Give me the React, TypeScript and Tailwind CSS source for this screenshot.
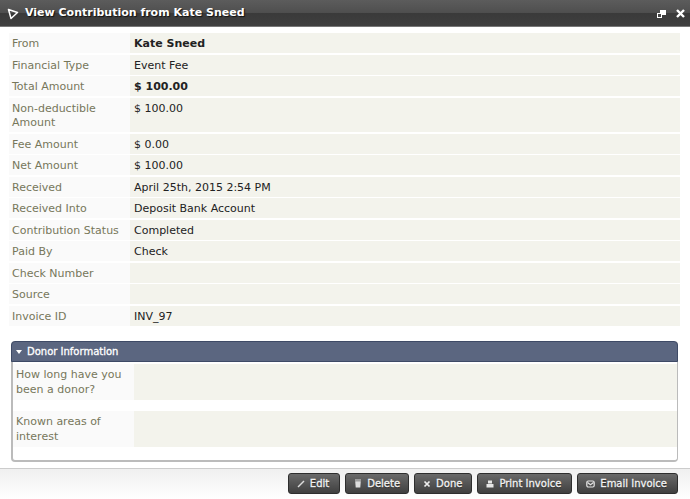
import { ReactNode } from "react";

const rows: { label: string; value: string; bold?: boolean; tall?: boolean }[] = [
  { label: "From", value: "Kate Sneed", bold: true },
  { label: "Financial Type", value: "Event Fee" },
  { label: "Total Amount", value: "$ 100.00", bold: true },
  { label: "Non-deductible Amount", value: "$ 100.00", tall: true },
  { label: "Fee Amount", value: "$ 0.00" },
  { label: "Net Amount", value: "$ 100.00" },
  { label: "Received", value: "April 25th, 2015 2:54 PM" },
  { label: "Received Into", value: "Deposit Bank Account" },
  { label: "Contribution Status", value: "Completed" },
  { label: "Paid By", value: "Check" },
  { label: "Check Number", value: "" },
  { label: "Source", value: "" },
  { label: "Invoice ID", value: "INV_97" },
];

function ActionButton({ icon, label, padding }: { icon: ReactNode; label: string; padding: string }) {
  return (
    <button className={`flex h-[21px] items-center gap-[5px] rounded-[3px] border border-[#2e2e2e] bg-gradient-to-b from-[#6a6a6a] to-[#404040] pl-[8px] ${padding} text-[10px] text-[#f2f2f2] [-webkit-text-stroke:0.3px_#f2f2f2] [text-shadow:0_1px_1px_#222]`}>
      {icon}
      {label}
    </button>
  );
}

const editIcon = (
  <svg width="8" height="8" viewBox="0 0 8 8" fill="none" stroke="#ddd" strokeWidth="1.4">
    <path d="M1 7 L7 1" />
  </svg>
);
const trashIcon = (
  <svg width="8" height="9" viewBox="0 0 8 9" fill="#ddd">
    <path d="M1 0.5h6v1H1z M1.2 2.2h5.6l-.5 6.3H1.7z" />
  </svg>
);
const doneIcon = (
  <svg width="8" height="8" viewBox="0 0 8 8" fill="none" stroke="#eee" strokeWidth="1.7">
    <path d="M1.5 1.5 L6.5 6.5 M6.5 1.5 L1.5 6.5" />
  </svg>
);
const printIcon = (
  <svg width="8" height="8" viewBox="0 0 8 8" fill="#e6e6e6">
    <path d="M2 0.5h4v3H2z M0.5 4h7v3.5h-7z" />
  </svg>
);
const mailIcon = (
  <svg width="9" height="8" viewBox="0 0 9 8" fill="none" stroke="#e6e6e6" strokeWidth="1.2">
    <rect x="0.8" y="1" width="7.4" height="6" rx="1.5" />
    <path d="M1.5 2.5 L4.5 4.8 L7.5 2.5" />
  </svg>
);

export default function App() {
  return (
    <div className="flex h-[499px] w-[690px] flex-col overflow-hidden bg-white font-['DejaVu_Sans',Verdana,sans-serif] text-[11px]">
      <div className="flex h-[27px] items-center justify-between border-b border-[#777] bg-[linear-gradient(#5c5c5c,#4f4f4f_48%,#3a3a3a_52%,#3f3f3f)] pl-[7px] pr-[5px] pt-[1px]">
        <div className="flex items-center gap-[6px] text-[11px] font-bold text-white [text-shadow:1px_1px_1px_#111]">
          <svg width="12" height="12" viewBox="0 0 12 12" fill="none" stroke="white" strokeWidth="1.5">
            <path d="M1.5 1.5 L10.5 4.5 L4 10.5 Z" strokeLinejoin="round" />
          </svg>
          View Contribution from Kate Sneed
        </div>
        <div className="flex items-center gap-[10px] text-white">
          <svg width="9" height="8" viewBox="0 0 9 8" fill="none" stroke="white">
            <rect x="3.5" y="0.5" width="5" height="4" fill="white" />
            <rect x="0.5" y="3.5" width="4" height="4" fill="#444" />
          </svg>
          <svg width="9" height="9" viewBox="0 0 9 9" fill="none" stroke="white" strokeWidth="2.4">
            <path d="M1 1 L8 8 M8 1 L1 8" />
          </svg>
        </div>
      </div>

      <div className="flex flex-col gap-[1.5px] pl-[9px] pr-[10px] pt-[6px]">
        {rows.map((row) => (
          <div key={row.label} className={`flex ${row.tall ? "h-[34.5px]" : "h-5"} leading-[14.5px]`}>
            <div className="w-[121px] bg-[#fafafa] pl-[3px] pt-[4px] text-[#77775a]">{row.label}</div>
            <div className={`flex-1 bg-[#f3f3ec] pl-[4px] pt-[4px] text-[#222] ${row.bold ? "font-bold" : ""}`}>
              {row.value}
            </div>
          </div>
        ))}
      </div>

      <div className="ml-[11px] mr-[12px] mt-[15.5px] h-[121px] rounded-[4px] border border-t-0 border-b-2 border-l-2 border-[#bbb]">
        <div className="-ml-[2px] -mr-px flex h-[21px] items-center gap-[5px] rounded-t-[4px] border border-[#3e4a66] bg-[#5b6680] pl-[3px] text-[10px] text-white [-webkit-text-stroke:0.3px_white]">
          <svg width="6" height="4" viewBox="0 0 6 4" fill="white" className="ml-[1px]">
            <path d="M0 0h6L3 4z" />
          </svg>
          <span>Donor Information</span>
        </div>
        <div className="mt-[2px] flex h-9 leading-[14.5px]">
          <div className="w-[121px] bg-[#fafafa] pl-[3px] pt-[4px] text-[#77775a]">How long have you been a donor?</div>
          <div className="flex-1 bg-[#f3f3ec]" />
        </div>
        <div className="mt-[11px] flex h-9 leading-[14.5px]">
          <div className="w-[121px] bg-[#fafafa] pl-[3px] pt-[4px] text-[#77775a]">Known areas of interest</div>
          <div className="flex-1 bg-[#f3f3ec]" />
        </div>
      </div>

      <div className="mt-[6px] flex flex-1 items-start justify-end gap-[5px] border-t border-[#ccc] bg-gradient-to-b from-[#f0f0f0] to-white pr-[12px] pt-[4px]">
        <ActionButton icon={editIcon} label="Edit" padding="pr-[10px]" />
        <ActionButton icon={trashIcon} label="Delete" padding="pr-[8px]" />
        <ActionButton icon={doneIcon} label="Done" padding="pr-[9px]" />
        <ActionButton icon={printIcon} label="Print Invoice" padding="pr-[10px]" />
        <ActionButton icon={mailIcon} label="Email Invoice" padding="pr-[10px]" />
      </div>
    </div>
  );
}
